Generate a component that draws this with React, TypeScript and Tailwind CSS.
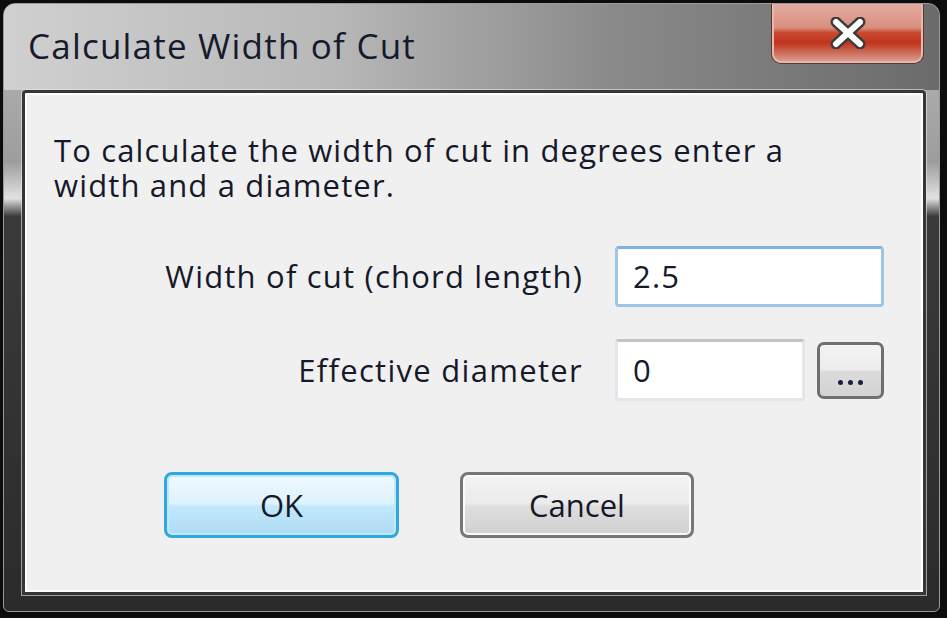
import React from 'react';

const font = { fontFamily: '"Open Sans", "Noto Sans", sans-serif' };

const CloseGlyph: React.FC = () => (
  <svg width="40" height="32" viewBox="0 0 40 32">
    <path d="M8 5 L32 27 M32 5 L8 27" stroke="#3b3b3b" strokeWidth="11" strokeLinecap="round" />
    <path d="M8 5 L32 27 M32 5 L8 27" stroke="#ffffff" strokeWidth="6" strokeLinecap="round" />
  </svg>
);

const App: React.FC = () => {
  return (
    <div className="w-[947px] h-[618px] bg-[#0c0c0c] pt-[3px] pl-[3px] pr-[7px] pb-[6px]" style={font}>
      {/* Window frame */}
      <div className="h-full flex flex-col rounded-t-[12px] rounded-b-[6px] border border-[#9a9a9a] overflow-hidden bg-[linear-gradient(to_bottom,#b9b9b9_0%,#9d9d9d_26%,#e2e2e2_32%,#3a3a3a_35%,#2b2b2b_100%)]">
        {/* Title bar */}
        <div className="h-[86px] flex items-start justify-between bg-[linear-gradient(to_right,#d0d0d0_0%,#b8b8b8_35%,#8a8a8a_65%,#6b6b6b_100%)]">
          <div className="pl-[24px] pt-[21px] text-[35px] leading-[42px] tracking-[1.2px] text-[#151a2c]">Calculate Width of Cut</div>
          <button className="mr-[16px] w-[151px] h-[59px] flex items-center justify-center rounded-b-[9px] border-2 border-t-0 border-[#e6b8ae] bg-[linear-gradient(to_bottom,#e2ab9f_0%,#d98f80_42%,#c94a30_50%,#c0341c_68%,#cd6a58_85%,#dc9c8e_100%)] shadow-[0_0_0_1px_#5a3a34]">
            <CloseGlyph />
          </button>
        </div>

        {/* Body row: side frames + client area */}
        <div className="flex flex-1">
          <div className="w-[18px]" />
          <div className="w-[904px] rounded-t-[4px] border-[3px] border-[#363636] bg-[#f0f0f0] shadow-[inset_0_0_0_2px_#ffffff,0_0_0_1px_rgba(235,235,235,0.6)] flex flex-col text-[31px] tracking-[1.15px] text-[#16192a]">
            <div className="pl-[29px] pt-[40px] leading-[35px]">
              <div>To calculate the width of cut in degrees enter a</div>
              <div>width and a diameter.</div>
            </div>

            <div className="mt-[43px] flex items-center">
              <div className="w-[558px] text-right tracking-[1.2px]">Width of cut (chord length)</div>
              <div className="ml-[32px] w-[269px] h-[61px] flex items-center pl-[15px] bg-white rounded-[4px] border-[3px] border-[#9cc6e8] border-t-[#7fb1de]">
                2.5
              </div>
            </div>

            <div className="mt-[32px] flex items-center">
              <div className="w-[558px] text-right tracking-[1.3px]">Effective diameter</div>
              <div className="ml-[32px] w-[190px] h-[62px] flex items-center pl-[15px] bg-white rounded-[3px] border-[3px] border-[#e3e6ea] border-t-[#c2c4c8]">
                0
              </div>
              <button className="ml-[12px] w-[67px] h-[57px] flex items-end justify-center pb-[11px] rounded-[7px] border-[3px] border-[#6f6f6f] bg-[linear-gradient(to_bottom,#f4f4f4_0%,#ececec_48%,#dcdcdc_52%,#d2d2d2_100%)]">
                <span className="flex gap-[5px]">
                  <span className="w-[5px] h-[5px] rounded-full bg-[#1b1f46]" />
                  <span className="w-[5px] h-[5px] rounded-full bg-[#1b1f46]" />
                  <span className="w-[5px] h-[5px] rounded-full bg-[#1b1f46]" />
                </span>
              </button>
            </div>

            <div className="mt-[71px] ml-[139px] flex gap-[61px] tracking-normal">
              <button className="w-[235px] h-[66px] rounded-[8px] border-[3px] border-[#2fa8e0] bg-[linear-gradient(to_bottom,#edf8fe_0%,#dff2fd_48%,#c2e8fc_52%,#aedbf4_100%)] shadow-[inset_0_0_0_2px_#bfe9fb]">
                OK
              </button>
              <button className="w-[234px] h-[66px] rounded-[8px] border-[3px] border-[#777777] bg-[linear-gradient(to_bottom,#f3f3f3_0%,#ebebeb_48%,#dedede_52%,#d0d0d0_100%)] shadow-[inset_0_0_0_2px_#fbfbfb]">
                Cancel
              </button>
            </div>
          </div>
          <div className="w-[13px]" />
        </div>

        {/* Bottom frame */}
        <div className="h-[16px]" />
      </div>
    </div>
  );
};

export default App;
